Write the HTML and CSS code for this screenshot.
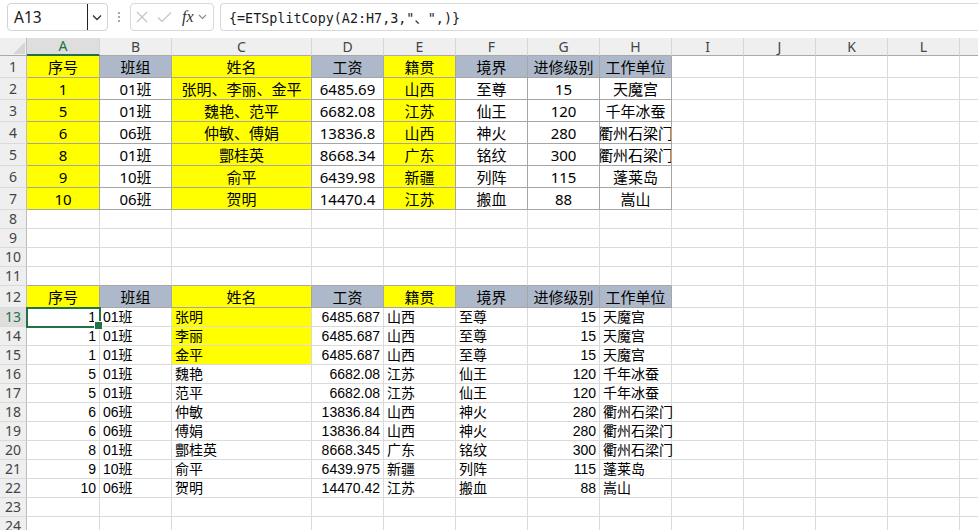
FILE: index.html
```html
<!DOCTYPE html>
<html lang="zh-CN">
<head>
<meta charset="utf-8">
<title>Sheet</title>
<link rel="stylesheet" href="styles.css">
</head>
<body>
<div class="bar">
  <div class="namebox">
    <span class="nb-text">A13</span>
    <span class="nb-dd"><svg width="10" height="7" viewBox="0 0 10 7"><polyline points="1,1.5 5,5.5 9,1.5" fill="none" stroke="#333" stroke-width="1.3"/></svg></span>
  </div>
  <div class="grip"><svg width="4" height="12" viewBox="0 0 4 12"><circle cx="2" cy="2" r="1" fill="#8a8a8a"/><circle cx="2" cy="6" r="1" fill="#8a8a8a"/><circle cx="2" cy="10" r="1" fill="#8a8a8a"/></svg></div>
  <div class="fxbox">
    <svg class="ic" width="12" height="12" viewBox="0 0 12 12"><path d="M1 1 L11 11 M11 1 L1 11" stroke="#c4c4c4" stroke-width="1.2" fill="none"/></svg>
    <svg class="ic" width="15" height="12" viewBox="0 0 15 12"><polyline points="1,6.5 5,10.5 14,1.5" stroke="#c4c4c4" stroke-width="1.2" fill="none"/></svg>
    <span class="fx">fx</span>
    <svg class="ic2" width="9" height="6" viewBox="0 0 9 6"><polyline points="1,1 4.5,4.5 8,1" fill="none" stroke="#8a8a8a" stroke-width="1.1"/></svg>
  </div>
  <div class="formula">{=ETSplitCopy(A2:H7,3,"、",)}</div>
</div>

<table class="sheet">
  <colgroup>
    <col class="w-rh"><col class="w-a"><col class="w-n"><col class="w-c"><col class="w-n"><col class="w-n"><col class="w-n"><col class="w-n"><col class="w-n"><col class="w-n"><col class="w-n"><col class="w-n"><col class="w-n"><col class="w-m">
  </colgroup>
  <tr class="hdr">
    <td class="corner"><svg width="26" height="17" viewBox="0 0 26 17"><polygon points="13,16 25,16 25,4" fill="#d6d6d6"/></svg></td>
    <td class="ch cur">A</td><td class="ch">B</td><td class="ch">C</td><td class="ch">D</td><td class="ch">E</td><td class="ch">F</td><td class="ch">G</td><td class="ch">H</td><td class="ch">I</td><td class="ch">J</td><td class="ch">K</td><td class="ch">L</td><td class="ch"></td>
  </tr>
  <tr class="r22">
    <td class="rh">1</td>
    <td class="t y">序号</td><td class="t g">班组</td><td class="t y">姓名</td><td class="t g">工资</td><td class="t y">籍贯</td><td class="t g">境界</td><td class="t g">进修级别</td><td class="t g">工作单位</td>
    <td></td><td></td><td></td><td></td><td></td>
  </tr>
  <tr class="r22">
    <td class="rh">2</td>
    <td class="t y">1</td><td class="t">01班</td><td class="t y">张明、李丽、金平</td><td class="t">6485.69</td><td class="t y">山西</td><td class="t">至尊</td><td class="t">15</td><td class="t">天魔宫</td>
    <td></td><td></td><td></td><td></td><td></td>
  </tr>
  <tr class="r22">
    <td class="rh">3</td>
    <td class="t y">5</td><td class="t">01班</td><td class="t y">魏艳、范平</td><td class="t">6682.08</td><td class="t y">江苏</td><td class="t">仙王</td><td class="t">120</td><td class="t">千年冰蚕</td>
    <td></td><td></td><td></td><td></td><td></td>
  </tr>
  <tr class="r22">
    <td class="rh">4</td>
    <td class="t y">6</td><td class="t">06班</td><td class="t y">仲敏、傅娟</td><td class="t">13836.8</td><td class="t y">山西</td><td class="t">神火</td><td class="t">280</td><td class="t tight"><div class="ov">衢州石梁门</div></td>
    <td></td><td></td><td></td><td></td><td></td>
  </tr>
  <tr class="r22">
    <td class="rh">5</td>
    <td class="t y">8</td><td class="t">01班</td><td class="t y">酆桂英</td><td class="t">8668.34</td><td class="t y">广东</td><td class="t">铭纹</td><td class="t">300</td><td class="t tight"><div class="ov">衢州石梁门</div></td>
    <td></td><td></td><td></td><td></td><td></td>
  </tr>
  <tr class="r22">
    <td class="rh">6</td>
    <td class="t y">9</td><td class="t">10班</td><td class="t y">俞平</td><td class="t">6439.98</td><td class="t y">新疆</td><td class="t">列阵</td><td class="t">115</td><td class="t">蓬莱岛</td>
    <td></td><td></td><td></td><td></td><td></td>
  </tr>
  <tr class="r22">
    <td class="rh">7</td>
    <td class="t y">10</td><td class="t">06班</td><td class="t y">贺明</td><td class="t">14470.4</td><td class="t y">江苏</td><td class="t">搬血</td><td class="t">88</td><td class="t">嵩山</td>
    <td></td><td></td><td></td><td></td><td></td>
  </tr>
  <tr class="r19"><td class="rh">8</td><td></td><td></td><td></td><td></td><td></td><td></td><td></td><td></td><td></td><td></td><td></td><td></td><td></td></tr>
  <tr class="r19"><td class="rh">9</td><td></td><td></td><td></td><td></td><td></td><td></td><td></td><td></td><td></td><td></td><td></td><td></td><td></td></tr>
  <tr class="r19"><td class="rh">10</td><td></td><td></td><td></td><td></td><td></td><td></td><td></td><td></td><td></td><td></td><td></td><td></td><td></td></tr>
  <tr class="r19"><td class="rh">11</td><td class="tb"></td><td class="tb"></td><td class="tb"></td><td class="tb"></td><td class="tb"></td><td class="tb"></td><td class="tb"></td><td class="tb"></td><td></td><td></td><td></td><td></td><td></td></tr>
  <tr class="r22">
    <td class="rh">12</td>
    <td class="t y">序号</td><td class="t g">班组</td><td class="t y">姓名</td><td class="t g">工资</td><td class="t y">籍贯</td><td class="t g">境界</td><td class="t g">进修级别</td><td class="t g">工作单位</td>
    <td></td><td></td><td></td><td></td><td></td>
  </tr>
  <tr class="r19">
    <td class="rh cur">13</td>
    <td class="n sel">1</td><td>01班</td><td class="y">张明</td><td class="n">6485.687</td><td>山西</td><td>至尊</td><td class="n">15</td><td>天魔宫</td>
    <td></td><td></td><td></td><td></td><td></td>
  </tr>
  <tr class="r19">
    <td class="rh">14</td>
    <td class="n">1</td><td>01班</td><td class="y">李丽</td><td class="n">6485.687</td><td>山西</td><td>至尊</td><td class="n">15</td><td>天魔宫</td>
    <td></td><td></td><td></td><td></td><td></td>
  </tr>
  <tr class="r19">
    <td class="rh">15</td>
    <td class="n">1</td><td>01班</td><td class="y">金平</td><td class="n">6485.687</td><td>山西</td><td>至尊</td><td class="n">15</td><td>天魔宫</td>
    <td></td><td></td><td></td><td></td><td></td>
  </tr>
  <tr class="r19">
    <td class="rh">16</td>
    <td class="n">5</td><td>01班</td><td>魏艳</td><td class="n">6682.08</td><td>江苏</td><td>仙王</td><td class="n">120</td><td>千年冰蚕</td>
    <td></td><td></td><td></td><td></td><td></td>
  </tr>
  <tr class="r19">
    <td class="rh">17</td>
    <td class="n">5</td><td>01班</td><td>范平</td><td class="n">6682.08</td><td>江苏</td><td>仙王</td><td class="n">120</td><td>千年冰蚕</td>
    <td></td><td></td><td></td><td></td><td></td>
  </tr>
  <tr class="r19">
    <td class="rh">18</td>
    <td class="n">6</td><td>06班</td><td>仲敏</td><td class="n">13836.84</td><td>山西</td><td>神火</td><td class="n">280</td><td>衢州石梁门</td>
    <td></td><td></td><td></td><td></td><td></td>
  </tr>
  <tr class="r19">
    <td class="rh">19</td>
    <td class="n">6</td><td>06班</td><td>傅娟</td><td class="n">13836.84</td><td>山西</td><td>神火</td><td class="n">280</td><td>衢州石梁门</td>
    <td></td><td></td><td></td><td></td><td></td>
  </tr>
  <tr class="r19">
    <td class="rh">20</td>
    <td class="n">8</td><td>01班</td><td>酆桂英</td><td class="n">8668.345</td><td>广东</td><td>铭纹</td><td class="n">300</td><td>衢州石梁门</td>
    <td></td><td></td><td></td><td></td><td></td>
  </tr>
  <tr class="r19">
    <td class="rh">21</td>
    <td class="n">9</td><td>10班</td><td>俞平</td><td class="n">6439.975</td><td>新疆</td><td>列阵</td><td class="n">115</td><td>蓬莱岛</td>
    <td></td><td></td><td></td><td></td><td></td>
  </tr>
  <tr class="r19">
    <td class="rh">22</td>
    <td class="n">10</td><td>06班</td><td>贺明</td><td class="n">14470.42</td><td>江苏</td><td>搬血</td><td class="n">88</td><td>嵩山</td>
    <td></td><td></td><td></td><td></td><td></td>
  </tr>
  <tr class="r19"><td class="rh">23</td><td></td><td></td><td></td><td></td><td></td><td></td><td></td><td></td><td></td><td></td><td></td><td></td><td></td></tr>
  <tr class="r19"><td class="rh">24</td><td></td><td></td><td></td><td></td><td></td><td></td><td></td><td></td><td></td><td></td><td></td><td></td><td></td></tr>
</table>
</body>
</html>
```

FILE: styles.css
```css
* { box-sizing: border-box; }
html, body { margin: 0; padding: 0; background: #fff; }
body {
  width: 978px;
  height: 530px;
  overflow: hidden;
  font-family: "Noto Sans", "Noto Sans CJK SC", sans-serif;
  color: #000;
}

/* ---------- formula bar ---------- */
.bar {
  height: 38px;
  display: flex;
  align-items: center;
  padding-left: 7px;
  padding-bottom: 4px;
}
.namebox {
  width: 101px;
  height: 28px;
  border: 1px solid #d3d3d3;
  border-radius: 4px;
  display: flex;
  align-items: center;
  padding-left: 6px;
}
.nb-text {
  flex: 1;
  font: 15.5px "Noto Sans", sans-serif;
  color: #1a1a1a;
}
.nb-dd {
  width: 19px;
  height: 26px;
  border-left: 1px solid #222;
  display: flex;
  align-items: center;
  justify-content: center;
  margin-right: 1px;
}
.grip {
  width: 22px;
  display: flex;
  justify-content: center;
  align-items: center;
}
.fxbox {
  width: 84px;
  height: 28px;
  border: 1px solid #d8d8d8;
  border-radius: 4px;
  display: flex;
  align-items: center;
  padding-left: 5px;
  gap: 9px;
}
.ic { display: block; }
.fx {
  font: italic 16px "Liberation Serif", serif;
  color: #333;
  margin-left: 1px;
  margin-right: -6px;
}
.ic2 { display: block; margin-left: 1px; }
.formula {
  margin-left: 6px;
  flex: 1;
  height: 28px;
  border: 1px solid #d8d8d8;
  border-right: none;
  border-radius: 4px 0 0 4px;
  display: flex;
  align-items: center;
  padding-left: 8px;
  font: 13.4px "DejaVu Sans Mono", "Noto Sans CJK SC", monospace;
  color: #1a1a1a;
}

/* ---------- sheet grid ---------- */
.sheet {
  border-collapse: separate;
  border-spacing: 0;
  table-layout: fixed;
  width: 1000px;
}
.w-rh { width: 27px; }
.w-a { width: 73px; }
.w-n { width: 72px; }
.w-c { width: 140px; }
.w-m { width: 40px; }

.sheet td {
  border-right: 1px solid #dadada;
  border-bottom: 1px solid #dadada;
  padding: 0 3px;
  white-space: nowrap;
  font-family: "Liberation Sans", "Noto Sans CJK SC", sans-serif;
  font-size: 14px;
  line-height: 17px;
  vertical-align: bottom;
  color: #000;
}
tr.hdr { height: 18px; }
tr.r22 { height: 22px; }
tr.r19 { height: 19px; }

.sheet td.corner {
  background: #efefef;
  border-right: 1px solid #bdbdbd;
  border-bottom: 1px solid #a9a9a9;
  padding: 0;
  vertical-align: top;
}
.corner svg { display: block; }
.sheet td.ch {
  background: #efefef;
  border-right: 1px solid #d6d6d6;
  border-bottom: 1px solid #a9a9a9;
  text-align: center;
  vertical-align: middle;
  font-family: "Noto Sans", sans-serif;
  font-size: 14px;
  line-height: 16px;
  color: #444;
}
.sheet td.ch.cur {
  background: #dedede;
  color: #217346;
  border-bottom: 2px solid #217346;
}
.sheet td.rh {
  background: #efefef;
  border-right: 1px solid #bdbdbd;
  border-bottom: 1px solid #dadada;
  text-align: center;
  vertical-align: middle;
  padding: 0;
  font-family: "Noto Sans", sans-serif;
  font-size: 14px;
  line-height: 16px;
  color: #444;
}
.sheet td.rh.cur {
  background: #dedede;
  color: #217346;
}

/* bordered table cells */
.sheet td.t {
  border-right: 1px solid #a6a6a6;
  border-bottom: 1px solid #a6a6a6;
  text-align: center;
  vertical-align: middle;
  font-family: "Noto Sans", "Noto Sans CJK SC", sans-serif;
  font-size: 15px;
  line-height: 20px;
}
.sheet td.tb { border-bottom: 1px solid #a6a6a6; }
.sheet td.tight { padding: 0; }
.ov {
  display: flex;
  justify-content: center;
  overflow: hidden;
  white-space: nowrap;
}

.sheet td.y { background: #ffff00; }
.sheet td.g { background: #adb9ca; }
.sheet td.n { text-align: right; }

.sheet td.sel {
  position: relative;
  outline: 2px solid #217346;
  outline-offset: -1px;
}
.sheet td.sel::after {
  content: "";
  position: absolute;
  right: -4px;
  bottom: -4px;
  width: 7px;
  height: 7px;
  background: #217346;
  border: 1px solid #fff;
}
```
